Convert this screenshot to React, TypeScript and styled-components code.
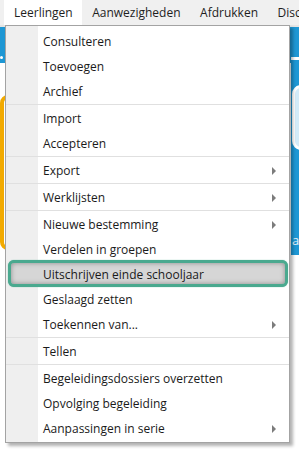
import styled, { createGlobalStyle } from 'styled-components';

const GlobalStyle = createGlobalStyle`
  html, body {
    margin: 0;
    padding: 0;
    background: #fff;
  }
  body {
    font-family: 'Open Sans', 'Noto Sans', 'Liberation Sans', sans-serif;
  }
`;

type Entry = { label: string; sub?: boolean; active?: boolean } | 'sep';

const topMenus = ['Leerlingen', 'Aanwezigheden', 'Afdrukken', 'Discipline'];

const entries: Entry[] = [
  { label: 'Consulteren' },
  { label: 'Toevoegen' },
  { label: 'Archief' },
  'sep',
  { label: 'Import' },
  { label: 'Accepteren' },
  'sep',
  { label: 'Export', sub: true },
  'sep',
  { label: 'Werklijsten', sub: true },
  'sep',
  { label: 'Nieuwe bestemming', sub: true },
  { label: 'Verdelen in groepen' },
  { label: 'Uitschrijven einde schooljaar', active: true },
  { label: 'Geslaagd zetten' },
  { label: 'Toekennen van...', sub: true },
  'sep',
  { label: 'Tellen' },
  'sep',
  { label: 'Begeleidingsdossiers overzetten' },
  { label: 'Opvolging begeleiding' },
  { label: 'Aanpassingen in serie', sub: true },
];

const App = () => {
  return (
    <>
      <GlobalStyle />
      <Screen>
        <MenuBar>
          {topMenus.map((name, i) => (
            <TopItem key={name} $open={i === 0}>
              {name}
            </TopItem>
          ))}
        </MenuBar>
        <Hero>
          <Side>
            <SideHead>
              <Dot />
            </SideHead>
            <SidePanel>
              <Tile />
            </SidePanel>
          </Side>
          <Main>
            <Rule />
            <Card />
            <Blurb>
              archief
              <br />
              en meer
            </Blurb>
          </Main>
        </Hero>

        <Dropdown>
          {entries.map((entry, i) =>
            entry === 'sep' ? (
              <Separator key={i} />
            ) : (
              <Item key={i} $active={!!entry.active}>
                <Label>{entry.label}</Label>
                {entry.sub && <Arrow />}
              </Item>
            )
          )}
        </Dropdown>
      </Screen>
    </>
  );
};

export default App;

const Screen = styled.div`
  position: relative;
  width: 299px;
  height: 451px;
  overflow: hidden;
  background: #fff;
`;

const MenuBar = styled.div`
  display: flex;
  height: 25px;
  padding-left: 4px;
  background: #f0f0f0;
  border-bottom: 2px solid #e4e4e4;
`;

interface TopItemProps {
  $open: boolean;
}

const TopItem = styled.div<TopItemProps>`
  padding: 0 9.5px 0 10px;
  line-height: 25px;
  font-size: 12px;
  color: #1e1e1e;
  white-space: nowrap;
  ${(props) => (props.$open ? 'background: #fff;' : '')}
`;

const Hero = styled.div`
  display: grid;
  grid-template-columns: 291px 1fr;
  height: 228px;
  background: #1e97d4;
`;

const Side = styled.div`
  display: flex;
  flex-direction: column;
`;

const SideHead = styled.div`
  height: 36px;
  padding-top: 29px;
  box-sizing: border-box;
`;

const Dot = styled.div`
  width: 3px;
  height: 3px;
  border-radius: 50%;
  background: #fff;
`;

const SidePanel = styled.div`
  flex: 1;
  background: #fff;
  padding-top: 32px;
`;

const Tile = styled.div`
  height: 155px;
  width: 200px;
  box-sizing: border-box;
  border: 4px solid #f2aa00;
  border-radius: 8px;
`;

const Main = styled.div`
  padding-top: 30px;
  overflow: hidden;
`;

const Rule = styled.div`
  height: 3px;
  background: #fff;
`;

const Card = styled.div`
  margin: 25px 0 0 1px;
  height: 65px;
  width: 60px;
  box-sizing: border-box;
  border: 3px solid #fff;
  border-radius: 9px;
  background: #d3ebf8;
`;

const Blurb = styled.div`
  margin-top: 82px;
  padding-left: 1px;
  font-size: 13px;
  line-height: 17px;
  color: #e6f3fb;
  white-space: nowrap;
`;

const Dropdown = styled.div`
  position: absolute;
  top: 25px;
  left: 5px;
  width: 285px;
  box-sizing: border-box;
  padding: 3px 0 1px;
  border: 1px solid #a3a3a3;
  background: linear-gradient(90deg, #efefef 32px, #fff 32px);
  box-shadow: 3px 3px 3px rgba(0, 0, 0, 0.3);
`;

const Separator = styled.div`
  height: 1px;
  margin-bottom: 1px;
  background: #e0e0e0;
`;

interface ItemProps {
  $active: boolean;
}

const Item = styled.div<ItemProps>`
  position: relative;
  display: flex;
  align-items: center;
  height: 25px;
  padding-left: 37px;
  font-size: 12px;
  color: #1a1a1a;
  white-space: nowrap;
  ${(props) =>
    props.$active
      ? `
    &::before {
      content: '';
      position: absolute;
      top: -2px;
      bottom: 0;
      left: 2px;
      right: 1px;
      border: 3px solid #4aa98f;
      border-radius: 6px;
      background: #d6d6d6;
      box-shadow: inset 0 0 5px rgba(0, 0, 0, 0.35), 0 0 1px #4aa98f;
    }
  `
      : ''}
`;

const Label = styled.span`
  position: relative;
`;

const Arrow = styled.span`
  position: relative;
  margin-left: auto;
  margin-right: 13px;
  width: 0;
  height: 0;
  border-left: 4px solid #7c7c7c;
  border-top: 4px solid transparent;
  border-bottom: 4px solid transparent;
`;
